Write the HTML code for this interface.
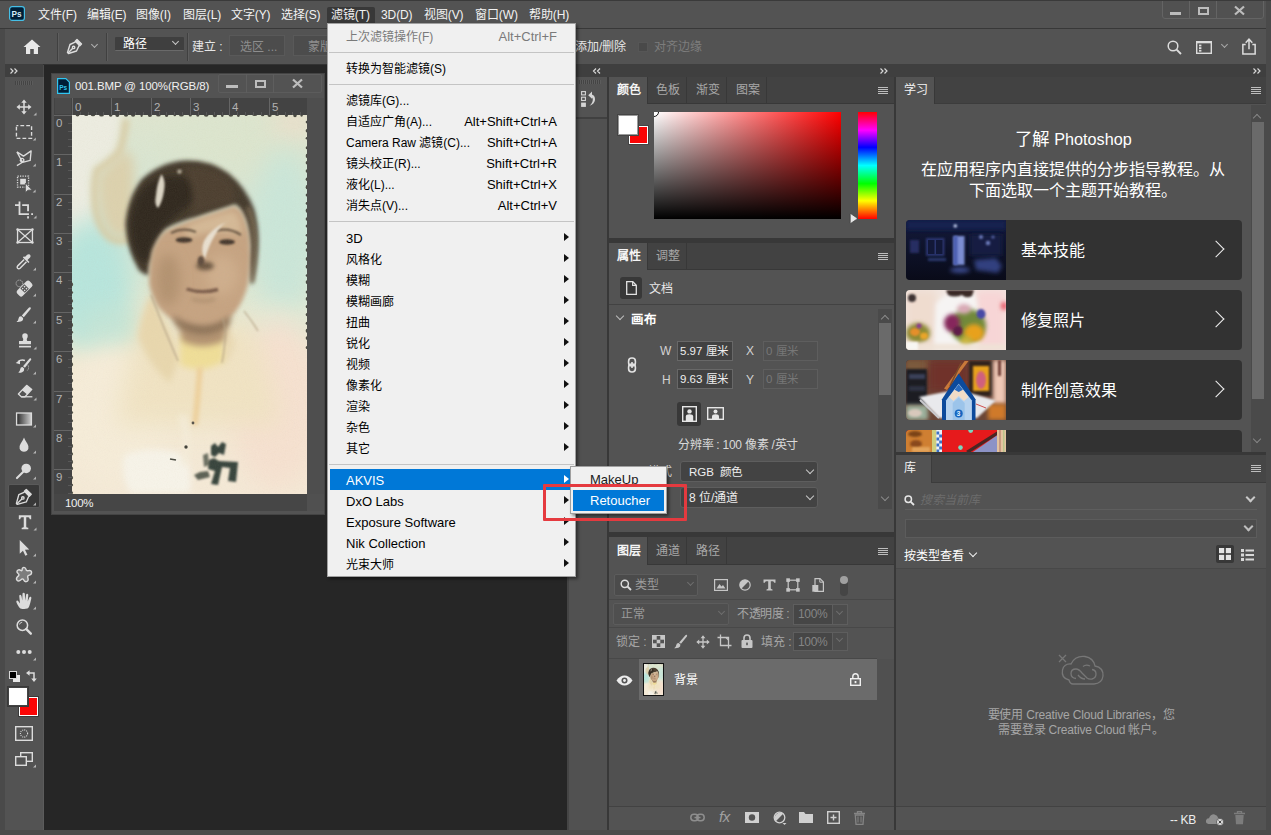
<!DOCTYPE html>
<html lang="zh-CN">
<head>
<meta charset="utf-8">
<title>Photoshop</title>
<style>
*{box-sizing:border-box;margin:0;padding:0}
html,body{width:1271px;height:835px;overflow:hidden}
body{position:relative;background:#4a4a4a;font-family:"Liberation Sans",sans-serif;font-size:12px;color:#e0e0e0;line-height:1}
.a{position:absolute}
.t{position:absolute;white-space:nowrap;line-height:14px;height:14px}
svg{position:absolute;overflow:visible}
.rn{font-size:11.5px;color:#b2b2b2;line-height:13px;height:13px}
/* top bars */
#menubar{left:0;top:0;width:1271px;height:28px;background:#535353;border-top:1px solid #3a3a3a}
#mb .t{top:8px;font-size:12px;color:#f2f2f2;letter-spacing:-0.1px}
#optbar{left:5px;top:29px;width:1261px;height:35px;background:#535353}
.hl{background:#383838}
.vsep{position:absolute;width:1px;background:#404040;box-shadow:1px 0 0 #5e5e5e}
/* panels */
.pbg{background:#535353}
.tabbar{background:#424242}
.tab{position:absolute;top:0;padding-left:2px;height:26px;border-right:1px solid #383838;color:#a8a8a8;font-size:12px;text-align:center;line-height:27px}
.tab.on{height:27px;background:#535353;color:#f4f4f4;font-weight:bold}
.hdr{background:#3f3f3f}
.pm{position:absolute;width:10px;height:7px;border-top:1px solid #bdbdbd;border-bottom:1px solid #bdbdbd}
.pm:before{content:"";position:absolute;left:0;top:1px;width:10px;height:1px;background:#bdbdbd}
.pm:after{content:"";position:absolute;left:0;top:3px;width:10px;height:1px;background:#bdbdbd}
/* dropdown menu */
#menu{left:327px;top:23px;width:249px;height:554px;background:#f0f0f0;border:1px solid #a0a0a0;box-shadow:2px 2px 3px rgba(0,0,0,.45);color:#111;font-size:13px}
#menu>*{margin-top:1px}
#menu>.t{margin-top:2px}
#menu>.t.dis{margin-top:1px}
#menu .t{left:18px;color:#000;font-size:12px;line-height:16px;height:16px}
#menu .lat{font-size:13px}
#menu .sc{left:auto;right:18px;font-size:13px}
#menu .dis{color:#7a7a7a}
#menu .sep{position:absolute;left:1px;right:1px;height:1px;background:#c4c4c4}
#menu .ar{position:absolute;left:236px;width:0;height:0;border-left:5px solid #111;border-top:4.5px solid transparent;border-bottom:4.5px solid transparent}
#menu .sel{position:absolute;left:2px;width:243px;height:21px;background:#0078d7}
#sub{left:570px;top:466px;width:97px;height:48px;background:#f0f0f0;border:1px solid #a0a0a0;box-shadow:2px 2px 3px rgba(0,0,0,.45)}
.fld{position:absolute;background:#414141;border:1px solid #686868;color:#eee;font-size:11.5px;line-height:18px;padding-left:2px;white-space:nowrap}
.dd{position:absolute;background:#454545;border:1px solid #666;border-radius:2px;color:#eee;font-size:12px;white-space:nowrap}
.chev{position:absolute;width:6px;height:6px;border-right:1.3px solid #c8c8c8;border-bottom:1.3px solid #c8c8c8;transform:rotate(45deg)}
.card{position:absolute;left:906px;width:336px;height:60px;background:#323232;border-radius:4px;overflow:hidden}
.card .t{left:115px;top:22px;font-size:16px;line-height:18px;height:18px;color:#fff}
.card .th{position:absolute;left:0;top:0;width:100px;height:60px;overflow:hidden}
.card .cv{position:absolute;left:304px;top:23px;width:12px;height:12px;border-right:1.6px solid #f0f0f0;border-top:1.6px solid #f0f0f0;transform:rotate(45deg) }
</style>
</head>
<body>
<!-- ===== window frame / base ===== -->
<div class="a" id="menubar"></div>
<div class="a hl" style="left:0;top:28px;width:1271px;height:1px"></div>
<div class="a" id="optbar"></div>
<div class="a" style="left:5px;top:64px;width:1261px;height:1px;background:#333"></div>

<!-- menubar content -->
<svg class="a" style="left:9px;top:6px" width="16" height="15" viewBox="0 0 16 15"><rect x="0.6" y="0.6" width="14.8" height="13.8" rx="2.5" fill="#001e36" stroke="#46bfe6" stroke-width="1.2"/><text x="2.6" y="10.8" font-family="Liberation Sans,sans-serif" font-size="8.2" font-weight="bold" fill="#d4ecfa">Ps</text></svg>
<div class="a" style="left:327px;top:7px;width:48px;height:17px;background:#383838;border-radius:2px 2px 0 0"></div>
<div id="mb" class="a" style="left:0;top:0;width:1271px;height:28px">
<span class="t mbi" style="left:38px">文件(F)</span>
<span class="t mbi" style="left:87px">编辑(E)</span>
<span class="t mbi" style="left:136px">图像(I)</span>
<span class="t mbi" style="left:183px">图层(L)</span>
<span class="t mbi" style="left:231px">文字(Y)</span>
<span class="t mbi" style="left:281px">选择(S)</span>
<span class="t mbi" style="left:331px">滤镜(T)</span>
<span class="t mbi" style="left:381px">3D(D)</span>
<span class="t mbi" style="left:424px">视图(V)</span>
<span class="t mbi" style="left:475px">窗口(W)</span>
<span class="t mbi" style="left:529px">帮助(H)</span>
</div>
<!-- window controls -->
<div class="a" style="left:1162px;top:-1px;width:102px;height:20px;background:#515151;border:1px solid #646464;border-radius:0 0 3px 3px"></div>
<div class="a" style="left:1189px;top:0;width:1px;height:18px;background:#646464"></div>
<div class="a" style="left:1216px;top:0;width:1px;height:18px;background:#646464"></div>
<div class="a" style="left:1170px;top:12px;width:11px;height:3px;background:#bcbcbc"></div>
<div class="a" style="left:1198px;top:7px;width:11px;height:8px;border:2px solid #bcbcbc"></div>
<svg style="left:1234px;top:6px" width="11" height="9" viewBox="0 0 11 9"><path d="M1 0.5 L10 8.5 M10 0.5 L1 8.5" stroke="#bcbcbc" stroke-width="2.2"/></svg>
<div class="a" style="left:1266px;top:0;width:5px;height:64px;background:#4a4a4a"></div>
<div class="a" style="left:0;top:0;width:1271px;height:1px;background:#3a3a3a"></div>
<!-- options bar content -->
<svg style="left:23px;top:39px" width="18" height="16" viewBox="0 0 18 16"><path d="M9 0.5 L0.5 8 L3 8 L3 15 L7.2 15 L7.2 10 L10.8 10 L10.8 15 L15 15 L15 8 L17.5 8 Z" fill="#e8e8e8"/></svg>
<div class="vsep" style="left:57px;top:33px;height:28px"></div>
<svg style="left:66px;top:37px" width="18" height="18" viewBox="0 0 18 18"><g fill="none" stroke="#dedede" stroke-width="1.4" stroke-linejoin="round"><path d="M11 2.5 L15.5 7 L13.8 8.7 L9.3 4.2 Z" fill="#dedede"/><path d="M9.6 4.8 L4 7.5 L1.5 15.5 L2.5 16.5 L10.5 14 L13.2 8.4"/><path d="M2 16 L7 11"/><circle cx="7.6" cy="10.4" r="1.2"/></g></svg>
<div class="chev" style="left:92px;top:42px;width:5px;height:5px;border-color:#b0b0b0"></div>
<div class="vsep" style="left:106px;top:33px;height:28px"></div>
<div class="dd" style="left:115px;top:37px;width:69px;height:14px;background:#3f3f3f;border:none;border-bottom:1px solid #6a6a6a;border-radius:1px"><span class="t" style="left:8px;top:1px;font-size:12px;color:#fff;line-height:13px;height:13px">路径</span><div class="chev" style="left:58px;top:2px;width:5px;height:5px"></div></div>
<div class="vsep" style="left:187px;top:33px;height:28px"></div>
<span class="t" style="left:192px;top:40px;font-size:12px;color:#e6e6e6">建立 :</span>
<div class="a" style="left:229px;top:35px;width:56px;height:21px;background:#4c4c4c;border:1px solid #595959"><span class="t" style="left:10px;top:4px;font-size:12px;color:#8e8e8e">选区 ...</span></div>
<div class="a" style="left:293px;top:35px;width:56px;height:21px;background:#4c4c4c;border:1px solid #595959"><span class="t" style="left:14px;top:4px;font-size:12px;color:#8e8e8e">蒙版</span></div>
<span class="t" style="left:575px;top:40px;font-size:12px;color:#e6e6e6">添加/删除</span>
<div class="a" style="left:638px;top:42px;width:10px;height:10px;background:#494949;border:1px solid #565656"></div>
<span class="t" style="left:654px;top:40px;font-size:12px;color:#7d7d7d">对齐边缘</span>
<svg style="left:1167px;top:40px" width="15" height="15" viewBox="0 0 15 15"><circle cx="6" cy="6" r="4.8" fill="none" stroke="#dcdcdc" stroke-width="1.5"/><path d="M9.6 9.6 L14 14" stroke="#dcdcdc" stroke-width="1.9"/></svg>
<svg style="left:1196px;top:41px" width="16" height="13" viewBox="0 0 16 13"><rect x="0.7" y="0.7" width="14.6" height="11.6" fill="none" stroke="#dcdcdc" stroke-width="1.4"/><rect x="0.7" y="0.7" width="14.6" height="1.6" fill="#dcdcdc"/><rect x="3" y="3.6" width="2.4" height="1.8" fill="#dcdcdc"/><rect x="3" y="6.2" width="2.4" height="1.8" fill="#dcdcdc"/><rect x="3" y="8.8" width="2.4" height="1.8" fill="#dcdcdc"/></svg>
<div class="chev" style="left:1222px;top:42px;width:5px;height:5px;border-color:#a8a8a8"></div>
<svg style="left:1241px;top:38px" width="16" height="17" viewBox="0 0 15 18"><path d="M4 7 L1 7 L1 17 L14 17 L14 7 L11 7" fill="none" stroke="#dcdcdc" stroke-width="1.6"/><path d="M7.5 12 L7.5 2 M4 5 L7.5 1.2 L11 5" fill="none" stroke="#dcdcdc" stroke-width="1.6"/></svg>
<!-- canvas area -->
<div class="a" style="left:44px;top:65px;width:523px;height:766px;background:#262626"></div>

<!-- ===== tools panel ===== -->
<div class="a pbg" style="left:5px;top:66px;width:38px;height:764px"></div>
<div class="a hdr" style="left:5px;top:64px;width:38px;height:13px"></div>
<div class="a" style="left:43px;top:77px;width:1px;height:753px;background:#5c5c5c"></div>
<svg style="left:10px;top:68px" width="8" height="6" viewBox="0 0 8 6"><path d="M0.5 0.5 L3 3 L0.5 5.5 M4.5 0.5 L7 3 L4.5 5.5" fill="none" stroke="#d8d8d8" stroke-width="1.2"/></svg>
<div class="a" style="left:15px;top:81px;width:18px;height:4px;background:repeating-linear-gradient(90deg,#444 0 1px,#5c5c5c 1px 2px)"></div>
<div class="a" style="left:8px;top:484px;width:32px;height:24px;background:#383838;border:1px solid #5a5a5a;border-radius:2px"></div>
<svg style="left:13.5px;top:96.8px" width="20" height="20" viewBox="0 0 20 20"><g transform="translate(10 10) scale(0.8) translate(-10 -10)"><path d="M10 2.5V17.5M2.5 10H17.5" stroke="#dcdcdc" stroke-width="1.9" fill="none"/><path d="M10 0.6L13.4 4.8H6.6ZM10 19.4L13.4 15.2H6.6ZM0.6 10L4.8 6.6V13.4ZM19.4 10L15.2 6.6V13.4Z" fill="#dcdcdc"/></g><path d="M22.5 18.5v-3l-3 3Z" fill="#b4b4b4"/></svg>
<svg style="left:14.2px;top:121.5px" width="20" height="20" viewBox="0 0 20 20"><g transform="translate(10 10) scale(0.86) translate(-10 -10)"><rect x="1.2" y="2.6" width="17.6" height="14.8" fill="none" stroke="#dcdcdc" stroke-width="1.6" stroke-dasharray="4.4 2.4" stroke-dashoffset="2.2"/></g><path d="M21.8 18.5v-3l-3 3Z" fill="#b4b4b4"/></svg>
<svg style="left:14.2px;top:147.6px" width="20" height="20" viewBox="0 0 20 20"><g transform="translate(10 10) scale(0.95) translate(-10 -10)"><path d="M2.5 3.5L9.5 8L17.5 2.5L16.5 12.5L8.5 14.5L2.5 3.5M8.5 14.5L2.5 18M6.5 11.2a1.8 1.8 0 1 0 3 2.2a1.8 1.8 0 1 0 -3 -2.2" fill="none" stroke="#dcdcdc" stroke-width="1.4" stroke-linejoin="round"/></g><path d="M21.8 18.5v-3l-3 3Z" fill="#b4b4b4"/></svg>
<svg style="left:14.4px;top:174.2px" width="20" height="20" viewBox="0 0 20 20"><g transform="translate(10 10) scale(0.95) translate(-10 -10)"><rect x="3.2" y="1.7" width="11.6" height="11.6" fill="none" stroke="#dcdcdc" stroke-width="1.4" stroke-dasharray="1.3 1.3"/><rect x="6" y="4.5" width="6" height="6" fill="#dcdcdc"/><path d="M11.5 9L11.5 19L14.2 16.5L18.5 16.3Z" fill="#dcdcdc" stroke="#535353" stroke-width="0.8"/></g><path d="M21.6 18.5v-3l-3 3Z" fill="#b4b4b4"/></svg>
<svg style="left:13.5px;top:199.8px" width="20" height="20" viewBox="0 0 20 20"><g transform="translate(10 10) scale(0.9) translate(-10 -10)"><path d="M0 4.5H5M5 0.5V14.5H15.5M8 4.5H14.5V11.5M14.5 17V19.5" fill="none" stroke="#dcdcdc" stroke-width="2"/><path d="M18 14.5H20" stroke="#dcdcdc" stroke-width="2"/></g><path d="M22.5 18.5v-3l-3 3Z" fill="#b4b4b4"/></svg>
<svg style="left:14.6px;top:226.1px" width="20" height="20" viewBox="0 0 20 20"><g transform="translate(10 10) scale(0.93) translate(-10 -10)"><rect x="2" y="3" width="16" height="14" fill="none" stroke="#dcdcdc" stroke-width="1.4"/><path d="M2 3L18 17M18 3L2 17" stroke="#dcdcdc" stroke-width="1.3"/><circle cx="2" cy="3" r="1.3" fill="#dcdcdc"/><circle cx="18" cy="3" r="1.3" fill="#dcdcdc"/><circle cx="2" cy="17" r="1.3" fill="#dcdcdc"/><circle cx="18" cy="17" r="1.3" fill="#dcdcdc"/></g></svg>
<svg style="left:14.0px;top:252.0px" width="20" height="20" viewBox="0 0 20 20"><g transform="translate(10 10) scale(0.92) translate(-10 -10)"><path d="M10.2 7.2L3.2 14.2Q2 15.5 3 16.8Q4.3 18 5.7 16.8L12.7 9.8" fill="none" stroke="#dcdcdc" stroke-width="1.6"/><path d="M8.8 5.2L14.8 11.2L16 10L13.8 7.8L16.6 5Q17.8 3.2 16.3 1.9Q15 0.9 13.4 2.2L11 4.6L10 3.8Z" fill="#dcdcdc"/></g><path d="M22.0 18.5v-3l-3 3Z" fill="#b4b4b4"/></svg>
<svg style="left:14.0px;top:278.0px" width="20" height="20" viewBox="0 0 20 20"><g transform="translate(10 10) scale(0.92) translate(-10 -10)"><g transform="rotate(-45 10.5 10.5)"><rect x="1" y="6.5" width="19" height="8.4" rx="2.6" fill="#dcdcdc"/><rect x="7.4" y="7.3" width="6.2" height="6.8" fill="#535353"/><circle cx="9.1" cy="9.2" r="0.9" fill="#dcdcdc"/><circle cx="11.9" cy="9.2" r="0.9" fill="#dcdcdc"/><circle cx="9.1" cy="12.2" r="0.9" fill="#dcdcdc"/><circle cx="11.9" cy="12.2" r="0.9" fill="#dcdcdc"/></g><circle cx="5" cy="5" r="3.6" fill="none" stroke="#dcdcdc" stroke-width="1" stroke-dasharray="1 1.2"/></g><path d="M22.0 18.5v-3l-3 3Z" fill="#b4b4b4"/></svg>
<svg style="left:14.0px;top:304.5px" width="20" height="20" viewBox="0 0 20 20"><g transform="translate(10 10) scale(0.92) translate(-10 -10)"><path d="M16.8 1.6Q18 2.4 17.2 3.6L9.8 12.4L7.6 10.6L15.2 2Q16 1.2 16.8 1.6Z" fill="#dcdcdc"/><path d="M7 11.4L9 13.2Q9.5 16 6.5 17.2Q4 18 1.8 17.6Q4 16 4 14Q4.2 11.3 7 11.4Z" fill="#dcdcdc"/></g><path d="M22.0 18.5v-3l-3 3Z" fill="#b4b4b4"/></svg>
<svg style="left:14.5px;top:330.5px" width="20" height="20" viewBox="0 0 20 20"><g transform="translate(10 10) scale(0.92) translate(-10 -10)"><path d="M10 1.5A3 3 0 0 1 13 4.5Q13 6 12 7.5Q11.6 9 12.5 10H16.5V13.5H3.5V10H7.5Q8.4 9 8 7.5Q7 6 7 4.5A3 3 0 0 1 10 1.5Z" fill="#dcdcdc"/><rect x="3.5" y="15.2" width="13" height="1.8" fill="#dcdcdc"/></g><path d="M21.5 18.5v-3l-3 3Z" fill="#b4b4b4"/></svg>
<svg style="left:14.0px;top:356.0px" width="20" height="20" viewBox="0 0 20 20"><g transform="translate(10 10) scale(0.92) translate(-10 -10)"><path d="M17.3 1.7Q18.4 2.5 17.6 3.6L11 12L9 10.4L15.8 2Q16.5 1.2 17.3 1.7Z" fill="#dcdcdc"/><path d="M8.4 11.2L10.2 12.8Q10.7 15.5 8 16.7Q6 17.5 3.8 17.2Q5.8 15.6 5.8 13.8Q6 11.2 8.4 11.2Z" fill="#dcdcdc"/><path d="M3.5 5.2Q7 2.6 11 4" fill="none" stroke="#dcdcdc" stroke-width="1.5"/><path d="M1 6.8L5.8 3.3L5.6 8Z" fill="#dcdcdc"/><path d="M14.5 9.5Q16 13 13 15.5" fill="none" stroke="#dcdcdc" stroke-width="1" stroke-dasharray="1 1.3"/></g><path d="M22.0 18.5v-3l-3 3Z" fill="#b4b4b4"/></svg>
<svg style="left:14.5px;top:382.0px" width="20" height="20" viewBox="0 0 20 20"><g transform="translate(10 10) scale(0.92) translate(-10 -10)"><path d="M11.8 2.8L17.4 7.2L10 15.2H6L2.8 12.2Z" fill="none" stroke="#dcdcdc" stroke-width="1.4" stroke-linejoin="round"/><path d="M11.8 2.8L17.4 7.2L12.4 12.6L6.8 8.2Z" fill="#dcdcdc"/><path d="M6 15.2H18" stroke="#dcdcdc" stroke-width="1.4"/></g><path d="M21.5 18.5v-3l-3 3Z" fill="#b4b4b4"/></svg>
<svg style="left:14.0px;top:408.5px" width="20" height="20" viewBox="0 0 20 20"><g transform="translate(10 10) scale(0.95) translate(-10 -10)"><defs><linearGradient id="gtool" x1="0" x2="1"><stop offset="0" stop-color="#2a2a2a"/><stop offset="1" stop-color="#d0d0d0"/></linearGradient></defs><rect x="2.2" y="3.7" width="15.6" height="12.6" fill="url(#gtool)" stroke="#dcdcdc" stroke-width="1.4"/></g><path d="M22.0 18.5v-3l-3 3Z" fill="#b4b4b4"/></svg>
<svg style="left:14.0px;top:434.5px" width="20" height="20" viewBox="0 0 20 20"><g transform="translate(10 10) scale(0.95) translate(-10 -10)"><path d="M10 2Q11 5 13.6 8.6Q15.5 11.5 14.6 14Q13.4 17.2 10 17.2Q6.6 17.2 5.4 14Q4.5 11.5 6.4 8.6Q9 5 10 2Z" fill="#dcdcdc"/></g><path d="M22.0 18.5v-3l-3 3Z" fill="#b4b4b4"/></svg>
<svg style="left:14.0px;top:460.5px" width="20" height="20" viewBox="0 0 20 20"><g transform="translate(10 10) scale(0.95) translate(-10 -10)"><circle cx="12.3" cy="7.3" r="5" fill="#dcdcdc"/><path d="M9 11L2.6 17.4" stroke="#dcdcdc" stroke-width="2.2" stroke-linecap="round"/></g><path d="M22.0 18.5v-3l-3 3Z" fill="#b4b4b4"/></svg>
<svg style="left:14.0px;top:486.5px" width="20" height="20" viewBox="0 0 20 20"><g transform="translate(10 10) scale(0.95) translate(-10 -10)"><g fill="none" stroke="#dcdcdc" stroke-width="1.4" stroke-linejoin="round"><path d="M12.4 2L17.6 7.2L15.6 9.2L10.4 4Z" fill="#dcdcdc"/><path d="M10.6 4.8L4.6 7.4L2 16.8L3 17.8L12.4 15.2L15 9.2"/><path d="M2.6 17.2L8 11.8"/><circle cx="8.8" cy="11" r="1.3"/></g></g><path d="M22.0 18.5v-3l-3 3Z" fill="#b4b4b4"/></svg>
<svg style="left:14.5px;top:512.0px" width="20" height="20" viewBox="0 0 20 20"><g transform="translate(10 10) scale(0.95) translate(-10 -10)"><path d="M3.5 3H16.5V7H15Q14.8 5 13.5 5H11.3V15Q11.3 16 13.5 16V17.5H6.5V16Q8.7 16 8.7 15V5H6.5Q5.2 5 5 7H3.5Z" fill="#dcdcdc"/></g><path d="M21.5 18.5v-3l-3 3Z" fill="#b4b4b4"/></svg>
<svg style="left:14.0px;top:538.0px" width="20" height="20" viewBox="0 0 20 20"><g transform="translate(10 10) scale(0.95) translate(-10 -10)"><path d="M5.5 1.5L15.5 11.5L11 11.8L13.6 17.2L11.4 18.2L8.9 12.8L5.5 16Z" fill="#dcdcdc"/></g><path d="M22.0 18.5v-3l-3 3Z" fill="#b4b4b4"/></svg>
<svg style="left:14.0px;top:564.5px" width="20" height="20" viewBox="0 0 20 20"><g transform="translate(10 10) scale(0.95) translate(-10 -10)"><path d="M9 2.2Q11.4 1.4 12.2 4.4Q12.6 6 14.8 5.4Q18 4.8 18 7.6Q17.8 9.8 15 10.4Q13.2 11 14.2 13.4Q15 16.4 12.4 17Q10.4 17.2 9.4 14.8Q8.6 13.2 6.8 15Q4.4 17.2 2.6 15.4Q1.2 13.6 3.6 11.4Q5.6 9.8 3.8 8.4Q1.6 6.6 3.4 5Q5 3.8 6.6 5.2Q8 6.2 8 4.4Q8 2.6 9 2.2Z" fill="#7d7d7d" stroke="#dcdcdc" stroke-width="1.5"/></g><path d="M22.0 18.5v-3l-3 3Z" fill="#b4b4b4"/></svg>
<svg style="left:14.0px;top:590.5px" width="20" height="20" viewBox="0 0 20 20"><g transform="translate(10 10) scale(0.95) translate(-10 -10)"><path d="M6.2 17.8Q4.5 16.8 2.2 11.8Q1.4 10 2.6 9.6Q3.8 9.4 4.8 11.2L5.8 12.6L5 5Q4.8 3.4 6 3.3Q7.1 3.3 7.4 5L8.2 9.6L8.4 2.6Q8.4 1.2 9.6 1.2Q10.8 1.2 10.9 2.6L11.2 9.6L12.2 3.4Q12.5 2.1 13.6 2.3Q14.6 2.6 14.5 4L13.9 10.4L15.6 6.4Q16.2 5.2 17.2 5.6Q18 6.1 17.7 7.4Q16.5 13 15.5 15.5Q14.8 17.4 13.6 17.9Q10 18.8 6.2 17.8Z" fill="#dcdcdc"/></g><path d="M22.0 18.5v-3l-3 3Z" fill="#b4b4b4"/></svg>
<svg style="left:14.0px;top:616.5px" width="20" height="20" viewBox="0 0 20 20"><g transform="translate(10 10) scale(0.9) translate(-10 -10)"><circle cx="8.2" cy="8" r="5.8" fill="none" stroke="#dcdcdc" stroke-width="1.7"/><path d="M12.6 12.4L17.6 17.4" stroke="#dcdcdc" stroke-width="2.6" stroke-linecap="round"/><path d="M5 7.2Q5.6 4.8 8 4.6" fill="none" stroke="#dcdcdc" stroke-width="1"/></g></svg>
<svg style="left:14.0px;top:642.0px" width="20" height="20" viewBox="0 0 20 20"><g transform="translate(10 10) scale(1.0) translate(-10 -10)"><circle cx="4.3" cy="10" r="2.0" fill="#dcdcdc"/><circle cx="10" cy="10" r="2.0" fill="#dcdcdc"/><circle cx="15.7" cy="10" r="2.0" fill="#dcdcdc"/></g><path d="M22.0 18.5v-3l-3 3Z" fill="#b4b4b4"/></svg>
<div class="a" style="left:13px;top:675px;width:7px;height:7px;background:#e8e8e8"></div>
<div class="a" style="left:9px;top:671px;width:8px;height:8px;background:#000;border:1px solid #d8d8d8"></div>
<svg style="left:26px;top:670px" width="11" height="12" viewBox="0 0 11 12"><path d="M2.5 3H8V9" fill="none" stroke="#dcdcdc" stroke-width="1.5"/><path d="M0 3L3.6 0.2V5.8ZM8 12L5.2 8.4H10.8Z" fill="#dcdcdc"/></svg>
<div class="a" style="left:19px;top:697px;width:19px;height:19px;background:#fa0505;border:1px solid #fff;box-shadow:0 0 0 1px #3a3a3a"></div>
<div class="a" style="left:8px;top:687px;width:20px;height:19px;background:#fff;border:1px solid #444;box-shadow:0 0 0 1px #3a3a3a"></div>
<svg style="left:15px;top:726px" width="18" height="15" viewBox="0 0 18 15"><rect x="0.7" y="0.7" width="16.6" height="13.6" fill="none" stroke="#dcdcdc" stroke-width="1.4"/><circle cx="9" cy="7.5" r="3.6" fill="none" stroke="#dcdcdc" stroke-width="1.1" stroke-dasharray="1 1.1"/></svg>
<svg style="left:15px;top:752px" width="22" height="16" viewBox="0 0 22 16"><rect x="5.7" y="0.7" width="11.6" height="8.6" fill="#535353" stroke="#dcdcdc" stroke-width="1.4"/><rect x="0.7" y="4.7" width="10.6" height="8.6" fill="#535353" stroke="#dcdcdc" stroke-width="1.4"/><path d="M21 15.5V12.5L18 15.5Z" fill="#b8b8b8"/></svg>
<!-- ===== document window ===== -->
<div class="a" style="left:51px;top:73px;width:274px;height:442px;background:#535353;border:1px solid #444"></div>
<div class="a" style="left:54px;top:98px;width:270px;height:413px;background:#4e4e4e"></div>
<!-- title -->
<svg style="left:57px;top:78px" width="13" height="16" viewBox="0 0 13 16"><path d="M0.6 0.6H8.8L12.4 4.2V15.4H0.6Z" fill="#001e36" stroke="#31c5f0" stroke-width="1.2"/><text x="2.2" y="11.5" font-family="Liberation Sans,sans-serif" font-size="6.5" font-weight="bold" fill="#31c5f0">Ps</text></svg>
<span class="t" style="left:75px;top:79px;font-size:12px;color:#f0f0f0;letter-spacing:-0.12px;font-size:11.5px">001.BMP @ 100%(RGB/8)</span>
<div class="a" style="left:218px;top:74px;width:104px;height:19px;border:1px solid #5c5c5c;border-radius:2px"></div>
<div class="a" style="left:246px;top:74px;width:1px;height:19px;background:#5e5e5e"></div>
<div class="a" style="left:273px;top:74px;width:1px;height:19px;background:#5e5e5e"></div>
<div class="a" style="left:226px;top:85px;width:12px;height:3px;background:#bdbdbd"></div>
<div class="a" style="left:255px;top:80px;width:11px;height:8px;border:2px solid #bdbdbd"></div>
<svg style="left:292px;top:79px" width="11" height="9" viewBox="0 0 11 9"><path d="M1 0.5L10 8.5M10 0.5L1 8.5" stroke="#bdbdbd" stroke-width="2.3"/></svg>
<!-- rulers -->
<div class="a" style="left:54px;top:98px;width:253px;height:17px;background:#434343"></div>
<div class="a" style="left:54px;top:98px;width:18px;height:396px;background:#434343"></div>
<div class="a" style="left:72px;top:112px;width:235px;height:3px;background:repeating-linear-gradient(90deg,#585858 0 1px,transparent 1px 7.874px)"></div>
<div class="a" style="left:68px;top:115px;width:4px;height:379px;background:repeating-linear-gradient(180deg,#585858 0 1px,transparent 1px 7.874px)"></div>
<div class="a" style="left:55px;top:98px;width:16px;height:16px;background:#4a4a4a"></div>
<div class="a" style="left:72px;top:98px;width:1px;height:17px;background:#656565"></div><span class="t rn" style="left:75px;top:101px">0</span><div class="a" style="left:111px;top:98px;width:1px;height:17px;background:#656565"></div><span class="t rn" style="left:114px;top:101px">1</span><div class="a" style="left:151px;top:98px;width:1px;height:17px;background:#656565"></div><span class="t rn" style="left:154px;top:101px">2</span><div class="a" style="left:190px;top:98px;width:1px;height:17px;background:#656565"></div><span class="t rn" style="left:193px;top:101px">3</span><div class="a" style="left:229px;top:98px;width:1px;height:17px;background:#656565"></div><span class="t rn" style="left:232px;top:101px">4</span><div class="a" style="left:269px;top:98px;width:1px;height:17px;background:#656565"></div><span class="t rn" style="left:272px;top:101px">5</span>
<div class="a" style="left:54px;top:115px;width:18px;height:1px;background:#656565"></div><span class="t rn" style="left:56px;top:117px">0</span><div class="a" style="left:54px;top:154px;width:18px;height:1px;background:#656565"></div><span class="t rn" style="left:56px;top:156px">1</span><div class="a" style="left:54px;top:194px;width:18px;height:1px;background:#656565"></div><span class="t rn" style="left:56px;top:196px">2</span><div class="a" style="left:54px;top:233px;width:18px;height:1px;background:#656565"></div><span class="t rn" style="left:56px;top:235px">3</span><div class="a" style="left:54px;top:272px;width:18px;height:1px;background:#656565"></div><span class="t rn" style="left:56px;top:274px">4</span><div class="a" style="left:54px;top:312px;width:18px;height:1px;background:#656565"></div><span class="t rn" style="left:56px;top:314px">5</span><div class="a" style="left:54px;top:351px;width:18px;height:1px;background:#656565"></div><span class="t rn" style="left:56px;top:353px">6</span><div class="a" style="left:54px;top:391px;width:18px;height:1px;background:#656565"></div><span class="t rn" style="left:56px;top:393px">7</span><div class="a" style="left:54px;top:430px;width:18px;height:1px;background:#656565"></div><span class="t rn" style="left:56px;top:432px">8</span><div class="a" style="left:54px;top:469px;width:18px;height:1px;background:#656565"></div><span class="t rn" style="left:56px;top:471px">9</span>
<!-- photo -->
<svg id="photo" style="left:72px;top:115px" width="235" height="379" viewBox="0 0 235 379">
<defs>
<filter id="b1" filterUnits="userSpaceOnUse" x="-40" y="-40" width="315" height="459"><feGaussianBlur stdDeviation="0.9"/></filter>
<filter id="b2" filterUnits="userSpaceOnUse" x="-40" y="-40" width="315" height="459"><feGaussianBlur stdDeviation="2"/></filter>
<filter id="b3" filterUnits="userSpaceOnUse" x="-40" y="-40" width="315" height="459"><feGaussianBlur stdDeviation="3.2"/></filter>
<filter id="b6" filterUnits="userSpaceOnUse" x="-40" y="-40" width="315" height="459"><feGaussianBlur stdDeviation="6"/></filter>
<filter id="b12" filterUnits="userSpaceOnUse" x="-40" y="-40" width="315" height="459"><feGaussianBlur stdDeviation="12"/></filter>
<filter id="b18" filterUnits="userSpaceOnUse" x="-40" y="-40" width="315" height="459"><feGaussianBlur stdDeviation="18"/></filter>
<filter id="grain" x="0" y="0" width="100%" height="100%"><feTurbulence type="fractalNoise" baseFrequency="0.9" numOctaves="2" seed="7" result="n"/><feColorMatrix in="n" type="matrix" values="0 0 0 0 0.5  0 0 0 0 0.45  0 0 0 0 0.35  0 0 0 0.10 0"/></filter>
<linearGradient id="pbg" x1="0" y1="0" x2="0" y2="1"><stop offset="0" stop-color="#dfe6d0"/><stop offset="0.30" stop-color="#d3e6d6"/><stop offset="0.55" stop-color="#e6ead4"/><stop offset="0.66" stop-color="#f4ead4"/><stop offset="1" stop-color="#f6ead8"/></linearGradient>
<clipPath id="pc"><rect width="235" height="379"/></clipPath>
</defs>
<g id="pg" clip-path="url(#pc)">
<rect width="235" height="379" fill="url(#pbg)"/>
<!-- broad colour fields -->
<path d="M-10 -10H52L46 38L22 56L22 100L30 125L-10 150Z" fill="#eeeee2" filter="url(#b6)"/>
<ellipse cx="160" cy="30" rx="70" ry="34" fill="#dde6cf" filter="url(#b18)"/>
<ellipse cx="222" cy="8" rx="22" ry="14" fill="#ece0cc" filter="url(#b12)"/>
<ellipse cx="20" cy="170" rx="40" ry="66" fill="#b8e6de" filter="url(#b12)"/>
<ellipse cx="40" cy="215" rx="34" ry="24" fill="#c4e6d8" filter="url(#b12)"/>
<ellipse cx="212" cy="120" rx="32" ry="85" fill="#cbe7da" filter="url(#b12)"/>
<ellipse cx="205" cy="215" rx="30" ry="26" fill="#e3ead8" filter="url(#b12)"/>
<ellipse cx="205" cy="290" rx="48" ry="85" fill="#f7e2d1" filter="url(#b12)"/>
<ellipse cx="40" cy="300" rx="55" ry="70" fill="#f7eeda" filter="url(#b12)"/>
<!-- stain ring -->
<path d="M54 4Q52 25 47 38Q35 50 25 55Q21 75 24 96Q28 116 40 124Q52 128 62 122" fill="none" stroke="#d8caa0" stroke-width="6" filter="url(#b3)"/>
<path d="M50 36Q60 34 62 52L62 120Q50 128 38 120Q24 104 26 60Q36 50 50 36Z" fill="#ddd2ae" filter="url(#b6)"/>
<!-- clothes -->
<path d="M44 310Q56 240 78 180L104 216L152 216L170 198Q196 235 208 310Z" fill="#f2e4c4" filter="url(#b12)"/>
<path d="M66 222Q70 196 79 179Q86 196 96 214Q102 228 106 246L98 268Q78 252 66 222Z" fill="#e9d8ae" filter="url(#b3)"/>
<path d="M150 204Q158 214 164 228Q160 244 150 250Z" fill="#ecdcb6" filter="url(#b3)"/>
<path d="M108 220L150 218L152 246Q130 260 108 250Z" fill="#f1df98" filter="url(#b3)"/>
<path d="M128 252Q126 280 123 310" fill="none" stroke="#efcf96" stroke-width="5" filter="url(#b2)"/>
<!-- neck -->
<path d="M104 196L158 196L152 226Q130 236 110 226Z" fill="#b29270" filter="url(#b3)"/>
<!-- hair mass -->
<path d="M53.6 109Q56 82 70 64Q88 48 110 45.8Q136 44 156 58Q174 72 182 94Q188 116 185 140Q183 158 179 170Q176 150 178 131Q176 108 172 102Q168 92 162.5 89Q146 95 117 104.5Q100 110 93 114Q84 124 80 136Q77 150 77 160Q72 160 66.7 155Q55 134 53.6 109Z" fill="#43382b" filter="url(#b2)"/>
<path d="M58 108Q60 84 74 70Q92 58 112 62Q128 66 126 84Q108 96 92 112Q82 124 78 146Q70 150 64 140Q58 126 58 108Z" fill="#2f271d" filter="url(#b3)"/>
<path d="M112 52Q140 48 158 66Q166 78 162 88Q140 92 118 102Q126 80 112 52Z" fill="#4b3d2d" filter="url(#b3)"/>
<path d="M176 92Q188 120 180 168" fill="none" stroke="#7d6d54" stroke-width="4" filter="url(#b2)"/>
<!-- face -->
<path d="M80 136Q86 122 93 116Q104 110 117 106Q146 97 162 91Q170 94 173 104Q178 118 178 131Q179 150 176 169Q172 186 162.5 198Q150 210 134 213.5Q118 212 105 207.5Q92 200 86 190.7Q79 178 77.5 169Q77 150 80 136Z" fill="#c6a381" filter="url(#b2)"/>
<path d="M116 110Q142 100 162 96Q170 104 170 120Q140 112 114 124Z" fill="#d5b996" filter="url(#b3)"/>
<ellipse cx="96" cy="165" rx="12" ry="26" fill="#b39270" filter="url(#b6)"/>
<ellipse cx="150" cy="160" rx="16" ry="20" fill="#cfae8c" filter="url(#b6)"/>
<path d="M100 200Q132 222 160 200L156 210Q132 228 104 210Z" fill="#8a6f55" filter="url(#b3)"/>
<ellipse cx="112" cy="125" rx="8.5" ry="2.8" fill="#43362a" filter="url(#b1)"/>
<ellipse cx="155" cy="127" rx="8" ry="2.8" fill="#43362a" filter="url(#b1)"/>
<path d="M99 118Q111 112 124 117M144 116Q157 112 169 120" fill="none" stroke="#6a5742" stroke-width="2.2" filter="url(#b1)"/>
<ellipse cx="133" cy="151" rx="9" ry="4.2" fill="#6b5541" filter="url(#b2)"/>
<path d="M114.6 174Q130 179 146 174.5" fill="none" stroke="#7a5c49" stroke-width="3.4" filter="url(#b1)"/>
<path d="M120 184Q131 188 143 184" fill="none" stroke="#a98a6a" stroke-width="2.5" filter="url(#b2)"/>
<!-- collar lines -->
<path d="M79 180Q92 214 106 246M150.6 203Q156 216 150 248M172 196Q180 206 186 216" fill="none" stroke="#b4a285" stroke-width="1.2" filter="url(#b1)"/>
<!-- scratches -->
<path d="M89.5 59Q94 66 92 76Q90 88 86 93Q82 90 84 80Q85 68 89.5 59Z" fill="#ddd6c6" filter="url(#b1)"/>
<circle cx="107.5" cy="56.6" r="2.4" fill="#a89f8c" filter="url(#b1)"/>
<path d="M157 106Q150 108 143 120Q136 132 133 144Q128 136 132 126Q140 112 157 106Z" fill="#e9e0d0" filter="url(#b1)"/>
<ellipse cx="129" cy="146" rx="3.4" ry="5" fill="#5e4c3c" filter="url(#b1)"/>
<!-- bottom damage + stamp -->
<path d="M52 340Q78 330 108 338Q122 350 118 378L58 378Q48 360 52 340Z" fill="#f8f5ea" filter="url(#b3)"/>
<path d="M110 300Q118 330 112 350" fill="none" stroke="#f6efdc" stroke-width="6" filter="url(#b3)"/>
<g fill="#36423b" filter="url(#b1)"><path d="M139 331L143 328L146 332L150 327L154 329L152 340L147 338L143 342L139 340Z"/><path d="M137 345L142 343L147 346L166 347L164 367L156 366L158 353L150 352L146 370L139 369L143 356L136 354Z"/><path d="M122 360L128 357L136 356L138 362L126 365Z" fill="#5a5f52"/><path d="M131 340L136 338L137 350L132 352Z" fill="#6a6e60"/></g>
<circle cx="114" cy="332" r="1.7" fill="#3e3e38"/><circle cx="121" cy="308" r="1.4" fill="#55524a"/><path d="M98 344L104 345" stroke="#4a4a42" stroke-width="1.6"/>
<rect width="235" height="379" filter="url(#grain)" opacity="0.9"/>
<ellipse cx="5.5" cy="0" rx="1.9" ry="1.4" fill="#4a4a42"/><ellipse cx="14.2" cy="0" rx="2.0" ry="1.1" fill="#4a4a42"/><ellipse cx="21.0" cy="0" rx="2.2" ry="1.3" fill="#4a4a42"/><ellipse cx="29.5" cy="0" rx="2.4" ry="1.6" fill="#4a4a42"/><ellipse cx="38.7" cy="0" rx="1.8" ry="1.8" fill="#4a4a42"/><ellipse cx="45.3" cy="0" rx="2.0" ry="2.0" fill="#4a4a42"/><ellipse cx="54.0" cy="0" rx="2.1" ry="1.8" fill="#4a4a42"/><ellipse cx="61.1" cy="0" rx="2.1" ry="1.7" fill="#4a4a42"/><ellipse cx="69.6" cy="0" rx="1.2" ry="2.0" fill="#4a4a42"/><ellipse cx="77.9" cy="0" rx="2.1" ry="2.1" fill="#4a4a42"/><ellipse cx="86.4" cy="0" rx="2.3" ry="1.5" fill="#4a4a42"/><ellipse cx="94.6" cy="0" rx="1.7" ry="2.1" fill="#4a4a42"/><ellipse cx="102.8" cy="0" rx="1.3" ry="1.2" fill="#4a4a42"/><ellipse cx="109.4" cy="0" rx="2.4" ry="1.5" fill="#4a4a42"/><ellipse cx="118.3" cy="0" rx="1.6" ry="1.6" fill="#4a4a42"/><ellipse cx="125.8" cy="0" rx="1.6" ry="1.7" fill="#4a4a42"/><ellipse cx="134.2" cy="0" rx="2.3" ry="1.8" fill="#4a4a42"/><ellipse cx="142.9" cy="0" rx="2.2" ry="2.2" fill="#4a4a42"/><ellipse cx="150.3" cy="0" rx="1.4" ry="2.0" fill="#4a4a42"/><ellipse cx="158.9" cy="0" rx="2.3" ry="1.7" fill="#4a4a42"/><ellipse cx="166.4" cy="0" rx="1.5" ry="2.0" fill="#4a4a42"/><ellipse cx="174.1" cy="0" rx="1.5" ry="1.1" fill="#4a4a42"/><ellipse cx="182.7" cy="0" rx="2.4" ry="1.1" fill="#4a4a42"/><ellipse cx="190.6" cy="0" rx="1.7" ry="1.2" fill="#4a4a42"/><ellipse cx="197.6" cy="0" rx="2.1" ry="2.0" fill="#4a4a42"/><ellipse cx="205.1" cy="0" rx="1.9" ry="1.1" fill="#4a4a42"/><ellipse cx="214.4" cy="0" rx="1.6" ry="2.1" fill="#4a4a42"/><ellipse cx="223.0" cy="0" rx="1.8" ry="2.2" fill="#4a4a42"/><ellipse cx="229.6" cy="0" rx="1.3" ry="1.7" fill="#4a4a42"/><ellipse cx="235" cy="7.1" rx="1.3" ry="1.4" fill="#4a4a42"/><ellipse cx="235" cy="15.8" rx="1.3" ry="1.8" fill="#4a4a42"/><ellipse cx="235" cy="23.3" rx="1.3" ry="1.2" fill="#4a4a42"/><ellipse cx="235" cy="32.7" rx="1.3" ry="1.5" fill="#4a4a42"/><ellipse cx="235" cy="40.9" rx="1.3" ry="2.1" fill="#4a4a42"/><ellipse cx="235" cy="47.8" rx="1.3" ry="1.7" fill="#4a4a42"/><ellipse cx="235" cy="56.0" rx="1.3" ry="1.8" fill="#4a4a42"/><ellipse cx="235" cy="64.2" rx="1.3" ry="1.8" fill="#4a4a42"/><ellipse cx="235" cy="72.2" rx="1.3" ry="2.1" fill="#4a4a42"/><ellipse cx="235" cy="80.0" rx="1.3" ry="1.6" fill="#4a4a42"/><ellipse cx="235" cy="88.4" rx="1.3" ry="1.4" fill="#4a4a42"/><ellipse cx="235" cy="95.6" rx="1.3" ry="2.2" fill="#4a4a42"/><ellipse cx="235" cy="104.0" rx="1.3" ry="1.7" fill="#4a4a42"/><ellipse cx="235" cy="111.0" rx="1.3" ry="1.6" fill="#4a4a42"/><ellipse cx="235" cy="120.2" rx="1.3" ry="1.2" fill="#4a4a42"/><ellipse cx="235" cy="128.2" rx="1.3" ry="1.8" fill="#4a4a42"/><ellipse cx="235" cy="135.1" rx="1.3" ry="1.8" fill="#4a4a42"/><ellipse cx="235" cy="143.9" rx="1.3" ry="1.9" fill="#4a4a42"/><ellipse cx="235" cy="151.7" rx="1.3" ry="1.9" fill="#4a4a42"/><ellipse cx="235" cy="160.5" rx="1.3" ry="1.2" fill="#4a4a42"/><ellipse cx="235" cy="167.1" rx="1.3" ry="1.9" fill="#4a4a42"/><ellipse cx="235" cy="176.9" rx="1.3" ry="1.5" fill="#4a4a42"/><ellipse cx="235" cy="183.9" rx="1.3" ry="1.8" fill="#4a4a42"/><ellipse cx="235" cy="191.6" rx="1.3" ry="1.6" fill="#4a4a42"/><ellipse cx="235" cy="199.6" rx="1.3" ry="1.6" fill="#4a4a42"/><ellipse cx="235" cy="208.2" rx="1.3" ry="1.5" fill="#4a4a42"/><ellipse cx="235" cy="215.8" rx="1.3" ry="2.0" fill="#4a4a42"/><ellipse cx="235" cy="223.1" rx="1.3" ry="1.8" fill="#4a4a42"/><ellipse cx="235" cy="232.5" rx="1.3" ry="1.5" fill="#4a4a42"/><ellipse cx="0" cy="169.4" rx="1.1" ry="1.8" fill="#55554a"/><ellipse cx="0" cy="177.5" rx="1.1" ry="1.2" fill="#55554a"/><ellipse cx="0" cy="185.9" rx="1.1" ry="1.7" fill="#55554a"/><ellipse cx="0" cy="193.2" rx="1.1" ry="1.3" fill="#55554a"/><ellipse cx="0" cy="201.7" rx="1.1" ry="1.8" fill="#55554a"/><ellipse cx="0" cy="209.9" rx="1.1" ry="1.9" fill="#55554a"/><ellipse cx="0" cy="217.3" rx="1.1" ry="1.3" fill="#55554a"/><ellipse cx="0" cy="226.3" rx="1.1" ry="1.9" fill="#55554a"/><ellipse cx="0" cy="233.9" rx="1.1" ry="1.2" fill="#55554a"/><ellipse cx="0" cy="241.2" rx="1.1" ry="1.5" fill="#55554a"/><ellipse cx="0" cy="249.4" rx="1.1" ry="1.8" fill="#55554a"/><ellipse cx="0" cy="258.7" rx="1.1" ry="1.2" fill="#55554a"/><ellipse cx="0" cy="265.6" rx="1.1" ry="1.8" fill="#55554a"/><ellipse cx="0" cy="274.3" rx="1.1" ry="1.8" fill="#55554a"/><ellipse cx="0" cy="281.7" rx="1.1" ry="1.1" fill="#55554a"/><ellipse cx="0" cy="289.6" rx="1.1" ry="1.8" fill="#55554a"/><ellipse cx="0" cy="297.5" rx="1.1" ry="1.3" fill="#55554a"/><ellipse cx="0" cy="305.8" rx="1.1" ry="1.4" fill="#55554a"/><ellipse cx="0" cy="313.8" rx="1.1" ry="1.9" fill="#55554a"/><ellipse cx="0" cy="321.3" rx="1.1" ry="1.0" fill="#55554a"/><ellipse cx="0" cy="330.9" rx="1.1" ry="1.9" fill="#55554a"/><ellipse cx="0" cy="339.0" rx="1.1" ry="1.4" fill="#55554a"/><ellipse cx="0" cy="346.9" rx="1.1" ry="1.9" fill="#55554a"/><ellipse cx="0" cy="353.4" rx="1.1" ry="1.7" fill="#55554a"/><ellipse cx="0" cy="362.7" rx="1.1" ry="1.7" fill="#55554a"/><ellipse cx="0" cy="370.0" rx="1.1" ry="1.3" fill="#55554a"/><ellipse cx="0" cy="377.7" rx="1.1" ry="1.2" fill="#55554a"/>
</g>
</svg>
<!-- status bar -->
<div class="a" style="left:54px;top:494px;width:253px;height:17px;background:#464646"></div>
<div class="a" style="left:307px;top:494px;width:17px;height:17px;background:#505050"></div>
<span class="t" style="left:65px;top:496px;font-size:11.5px;color:#f0f0f0;letter-spacing:-0.3px">100%</span>
<!-- ===== collapsed icon strip ===== -->
<div class="a" style="left:567px;top:64px;width:330px;height:13px;background:#3f3f3f"></div>
<div class="a" style="left:567px;top:77px;width:40px;height:753px;background:#515151;border-left:2px solid #454545"></div>
<div class="a pbg" style="left:577px;top:77px;width:30px;height:40px"></div>
<div class="a" style="left:569px;top:117px;width:38px;height:2px;background:#404040"></div>
<div class="a" style="left:607px;top:77px;width:2px;height:753px;background:#383838"></div>
<svg style="left:593px;top:68px" width="8" height="6" viewBox="0 0 8 6"><path d="M3 0.5L0.5 3L3 5.5M7 0.5L4.5 3L7 5.5" fill="none" stroke="#d8d8d8" stroke-width="1.2"/></svg>
<div class="a" style="left:579px;top:80px;width:22px;height:4px;background:repeating-linear-gradient(90deg,#444 0 1px,#5c5c5c 1px 2px)"></div>
<svg style="left:581px;top:91px" width="17" height="16" viewBox="0 0 17 16"><rect x="0.6" y="0.6" width="3.8" height="3.3" fill="none" stroke="#d6d6d6" stroke-width="1.1"/><rect x="0.6" y="6.2" width="3.8" height="3.3" fill="none" stroke="#d6d6d6" stroke-width="1.1"/><rect x="0.1" y="11.6" width="4.8" height="4.3" fill="#d6d6d6"/><path d="M9 3.2Q14.5 3.5 14 9Q13.5 13 8.5 14.8Q12 11.5 11.8 8.5Q11.6 5.6 9 5.4Z" fill="#d6d6d6"/><path d="M7.2 4.2L11 0.6V7.8Z" fill="#d6d6d6"/></svg>
<!-- ===== middle panel column ===== -->
<div class="a pbg" style="left:609px;top:77px;width:285px;height:753px"></div>
<div class="a" style="left:894px;top:77px;width:2px;height:753px;background:#383838"></div>
<svg style="left:880px;top:68px" width="8" height="6" viewBox="0 0 8 6"><path d="M0.5 0.5L3 3L0.5 5.5M4.5 0.5L7 3L4.5 5.5" fill="none" stroke="#d8d8d8" stroke-width="1.2"/></svg>
<!-- COLOR PANEL -->
<div class="a tabbar" style="left:609px;top:77px;width:285px;height:27px;border-bottom:1px solid #383838">
 <div class="tab on" style="left:0;width:39px">颜色</div><div class="tab" style="left:39px;width:39px">色板</div><div class="tab" style="left:78px;width:40px">渐变</div><div class="tab" style="left:118px;width:40px">图案</div>
 <div class="pm" style="left:269px;top:10px"></div>
</div>
<div class="a" style="left:629px;top:126px;width:19px;height:18px;background:#fa0505;border:1px solid #fff;box-shadow:0 0 0 1px #444"></div>
<div class="a" style="left:618px;top:115px;width:20px;height:20px;background:#fff;border:1px solid #9a9a9a;box-shadow:0 0 0 1px #444"></div>
<div class="a" style="left:654px;top:112px;width:187px;height:107px;overflow:hidden;background:linear-gradient(to top,#000,rgba(0,0,0,0)),linear-gradient(to right,#fff,#f00)"><div class="a" style="left:-5px;top:-5px;width:10px;height:10px;border-radius:5px;background:#fff;border:1px solid #111"></div></div>
<div class="a" style="left:858px;top:112px;width:19px;height:107px;background:linear-gradient(to bottom,#f00 0%,#f0f 17%,#00f 33%,#0ff 50%,#0f0 67%,#ff0 83%,#f00 100%)"></div>
<svg style="left:849px;top:213px" width="9" height="11" viewBox="0 0 9 11"><path d="M1.2 1.2Q1.2 0.4 2 0.8L7.8 4.8Q8.6 5.5 7.8 6.2L2 10.2Q1.2 10.6 1.2 9.8Z" fill="#e8e8e8" stroke="#3a3a3a" stroke-width="0.7"/></svg>
<div class="a" style="left:609px;top:238px;width:285px;height:5px;background:#383838"></div>
<!-- PROPERTIES PANEL -->
<div class="a tabbar" style="left:609px;top:243px;width:285px;height:27px;border-bottom:1px solid #383838">
 <div class="tab on" style="left:0;width:39px">属性</div><div class="tab" style="left:39px;width:39px">调整</div>
 <div class="pm" style="left:269px;top:10px"></div>
</div>
<div class="a" style="left:620px;top:277px;width:22px;height:22px;background:#383838;border-radius:3px"></div>
<svg style="left:626px;top:281px" width="11" height="14" viewBox="0 0 11 14"><path d="M0.7 0.7H6.8L10.3 4.2V13.3H0.7Z" fill="none" stroke="#e2e2e2" stroke-width="1.3"/><path d="M6.6 0.9V4.4H10.1" fill="none" stroke="#e2e2e2" stroke-width="1.1"/></svg>
<span class="t" style="left:649px;top:282px;font-size:12px;color:#e8e8e8">文档</span>
<div class="a" style="left:609px;top:304px;width:285px;height:1px;background:#424242"></div>
<div class="chev" style="left:617px;top:313px;width:6px;height:6px;border-color:#bdbdbd"></div>
<span class="t" style="left:631px;top:313px;font-size:12.5px;color:#fff;font-weight:bold">画布</span>
<span class="t" style="left:660px;top:344px;font-size:12px;color:#d2d2d2">W</span>
<div class="fld" style="left:677px;top:341px;width:56px;height:20px">5.97 厘米</div>
<span class="t" style="left:746px;top:344px;font-size:12px;color:#d2d2d2">X</span>
<div class="fld" style="left:763px;top:341px;width:55px;height:20px;color:#777;border-color:#5e5e5e;background:#505050">0 厘米</div>
<span class="t" style="left:662px;top:373px;font-size:12px;color:#d2d2d2">H</span>
<div class="fld" style="left:677px;top:369px;width:56px;height:20px">9.63 厘米</div>
<span class="t" style="left:746px;top:373px;font-size:12px;color:#d2d2d2">Y</span>
<div class="fld" style="left:763px;top:369px;width:55px;height:20px;color:#777;border-color:#5e5e5e;background:#505050">0 厘米</div>
<svg style="left:627px;top:357px" width="10" height="16" viewBox="0 0 10 16"><rect x="1.6" y="1" width="6.8" height="8" rx="3.2" fill="none" stroke="#e2e2e2" stroke-width="1.6"/><rect x="1.6" y="7" width="6.8" height="8" rx="3.2" fill="none" stroke="#e2e2e2" stroke-width="1.6"/><rect x="4.2" y="5" width="1.6" height="6" fill="#e2e2e2"/></svg>
<div class="a" style="left:677px;top:402px;width:24px;height:24px;background:#383838;border-radius:3px"></div>
<svg style="left:682px;top:406px" width="15" height="16" viewBox="0 0 15 16"><rect x="0.7" y="0.7" width="13.6" height="14.6" fill="none" stroke="#e6e6e6" stroke-width="1.4"/><circle cx="7.5" cy="5.4" r="2.2" fill="#e6e6e6"/><path d="M3.8 15V10.5Q3.8 8.2 7.5 8.2Q11.2 8.2 11.2 10.5V15Z" fill="#e6e6e6"/></svg>
<svg style="left:707px;top:407px" width="17" height="13" viewBox="0 0 17 13"><rect x="0.7" y="0.7" width="15.6" height="11.6" fill="none" stroke="#e6e6e6" stroke-width="1.4"/><circle cx="8.5" cy="4.6" r="2" fill="#e6e6e6"/><path d="M5 12V9.2Q5 7.2 8.5 7.2Q12 7.2 12 9.2V12Z" fill="#e6e6e6"/></svg>
<span class="t" style="left:678px;top:438px;font-size:12px;color:#dadada;letter-spacing:-0.25px">分辨率 : 100 像素 /英寸</span>
<span class="t" style="left:648px;top:465px;font-size:12px;color:#dadada">模式</span>
<div class="dd" style="left:680px;top:461px;width:138px;height:21px;background:#434343;border-color:#5e5e5e;border-radius:3px"><span class="t" style="left:8px;top:3px;font-size:11.5px">RGB&nbsp; 颜色</span><div class="chev" style="left:126px;top:5px"></div></div>
<div class="dd" style="left:680px;top:487px;width:138px;height:21px;background:#434343;border-color:#5e5e5e;border-radius:3px"><span class="t" style="left:8px;top:3px;font-size:12px">8 位/通道</span><div class="chev" style="left:126px;top:5px"></div></div>
<div class="a" style="left:878px;top:309px;width:14px;height:200px;background:#4a4a4a"></div>
<div class="a" style="left:879px;top:323px;width:12px;height:72px;background:#6a6a6a"></div>
<div class="chev" style="left:882px;top:316px;width:6px;height:6px;border-color:#8a8a8a;transform:rotate(225deg)"></div>
<div class="chev" style="left:882px;top:494px;width:6px;height:6px;border-color:#8a8a8a"></div>
<div class="a" style="left:609px;top:532px;width:285px;height:5px;background:#383838"></div>
<!-- LAYERS PANEL -->
<div class="a tabbar" style="left:609px;top:537px;width:285px;height:28px;border-bottom:1px solid #383838">
 <div class="tab on" style="left:0;width:39px;height:28px;line-height:28px">图层</div><div class="tab" style="left:39px;width:39px;height:27px;line-height:28px">通道</div><div class="tab" style="left:78px;width:40px;height:27px;line-height:28px">路径</div>
 <div class="pm" style="left:269px;top:11px"></div>
</div>

<div class="a" style="left:614px;top:574px;width:84px;height:22px;background:#4b4b4b;border:1px solid #5c5c5c;border-radius:2px"></div>
<svg style="left:620px;top:579px" width="12" height="12" viewBox="0 0 12 12"><circle cx="4.8" cy="4.8" r="3.6" fill="none" stroke="#dcdcdc" stroke-width="1.5"/><path d="M7.5 7.5L11 11" stroke="#dcdcdc" stroke-width="1.8"/></svg>
<span class="t" style="left:635px;top:578px;font-size:12px;color:#9c9c9c">类型</span>
<div class="chev" style="left:688px;top:580px;width:5px;height:5px;border-color:#6e6e6e"></div>
<svg style="left:714px;top:579px" width="14" height="12" viewBox="0 0 14 12"><rect x="0.6" y="0.6" width="12.8" height="10.8" fill="none" stroke="#c6c6c6" stroke-width="1.2"/><path d="M2.5 9.5L5.5 5L7.5 7.5L9 6L11.5 9.5Z" fill="#c6c6c6"/></svg>
<svg style="left:739px;top:579px" width="12" height="12" viewBox="0 0 12 12"><circle cx="6" cy="6" r="5.2" fill="none" stroke="#c6c6c6" stroke-width="1.2"/><path d="M2.3 9.7A5.2 5.2 0 0 1 9.7 2.3Z" fill="#c6c6c6"/></svg>
<svg style="left:763px;top:579px" width="13" height="12" viewBox="0 0 13 12"><path d="M0.5 0.5H12.5V3.8H11.2Q11 2.2 9.8 2.2H7.8V9.6Q7.8 10.4 9.5 10.4V11.5H3.5V10.4Q5.2 10.4 5.2 9.6V2.2H3.2Q2 2.2 1.8 3.8H0.5Z" fill="#c6c6c6"/></svg>
<svg style="left:786px;top:578px" width="14" height="14" viewBox="0 0 14 14"><rect x="2.2" y="2.2" width="9.6" height="9.6" fill="none" stroke="#c6c6c6" stroke-width="1.2"/><rect x="0.3" y="0.3" width="3.6" height="3.6" fill="#c6c6c6"/><rect x="10.1" y="0.3" width="3.6" height="3.6" fill="#c6c6c6"/><rect x="0.3" y="10.1" width="3.6" height="3.6" fill="#c6c6c6"/><rect x="10.1" y="10.1" width="3.6" height="3.6" fill="#c6c6c6"/></svg>
<svg style="left:812px;top:578px" width="12" height="14" viewBox="0 0 12 14"><path d="M3 0.6H8L11.4 4V13.4H3Z" fill="none" stroke="#c6c6c6" stroke-width="1.2"/><path d="M7.8 0.8V4.2H11.2" fill="none" stroke="#c6c6c6" stroke-width="1"/><rect x="0.3" y="7" width="6" height="6.7" fill="#c6c6c6"/></svg>
<div class="a" style="left:840px;top:580px;width:8px;height:16px;background:#454545;border-radius:4px"></div>
<div class="a" style="left:840px;top:576px;width:8px;height:8px;background:#a0a0a0;border-radius:4px"></div>
<div class="a" style="left:609px;top:599px;width:285px;height:1px;background:#484848"></div>
<div class="a" style="left:613px;top:603px;width:116px;height:22px;background:#4f4f4f;border:1px solid #5c5c5c;border-radius:2px"></div>
<span class="t" style="left:621px;top:607px;font-size:12px;color:#9a9a9a">正常</span>
<div class="chev" style="left:719px;top:609px;width:5px;height:5px;border-color:#6e6e6e"></div>
<span class="t" style="left:737px;top:607px;font-size:12px;color:#a6a6a6;letter-spacing:-0.4px">不透明度 :</span>
<div class="a" style="left:793px;top:604px;width:55px;height:21px;border:1px solid #5e5e5e;background:#4d4d4d"></div>
<div class="a" style="left:794px;top:605px;width:39px;height:19px;background:#464646;border-right:1px solid #5e5e5e"></div>
<span class="t" style="left:798px;top:607px;font-size:12px;color:#858585;letter-spacing:-0.3px">100%</span>
<div class="chev" style="left:837px;top:609px;width:5px;height:5px;border-color:#6e6e6e"></div>
<div class="a" style="left:609px;top:627px;width:285px;height:1px;background:#484848"></div>
<span class="t" style="left:616px;top:635px;font-size:12px;color:#a6a6a6">锁定 :</span>
<svg style="left:652px;top:635px" width="13" height="13" viewBox="0 0 13 13"><rect x="0.5" y="0.5" width="12" height="12" fill="none" stroke="#c6c6c6" stroke-width="1"/><rect x="1" y="1" width="3.7" height="3.7" fill="#c6c6c6"/><rect x="8.3" y="1" width="3.7" height="3.7" fill="#c6c6c6"/><rect x="4.7" y="4.7" width="3.6" height="3.6" fill="#c6c6c6"/><rect x="1" y="8.3" width="3.7" height="3.7" fill="#c6c6c6"/><rect x="8.3" y="8.3" width="3.7" height="3.7" fill="#c6c6c6"/></svg>
<svg style="left:673px;top:634px" width="15" height="15" viewBox="0 0 15 15"><path d="M13.6 0.8Q14.6 1.5 13.9 2.5L8 9.8L6.2 8.4L12.4 1.2Q13 0.5 13.6 0.8Z" fill="#c6c6c6"/><path d="M5.7 9L7.4 10.5Q7.8 12.8 5.4 13.8Q3.4 14.5 1.2 14.2Q3.2 12.8 3.2 11.2Q3.4 9 5.7 9Z" fill="#c6c6c6"/></svg>
<svg style="left:696px;top:635px" width="14" height="14" viewBox="0 0 14 14"><path d="M7 2V12M2 7H12" stroke="#c6c6c6" stroke-width="1.3"/><path d="M7 0.3L9.4 3.2H4.6ZM7 13.7L9.4 10.8H4.6ZM0.3 7L3.2 4.6V9.4ZM13.7 7L10.8 4.6V9.4Z" fill="#c6c6c6"/></svg>
<svg style="left:717px;top:634px" width="15" height="15" viewBox="0 0 15 15"><path d="M3.5 0.5V11.5H14.5M0.5 3.5H11.5V14.5" fill="none" stroke="#c6c6c6" stroke-width="1.3"/><path d="M9 3.5L11.5 6" stroke="#c6c6c6" stroke-width="1.2"/></svg>
<svg style="left:741px;top:634px" width="12" height="14" viewBox="0 0 12 14"><rect x="0.5" y="6" width="11" height="8" rx="1" fill="#c6c6c6"/><path d="M3 6V4Q3 1 6 1Q9 1 9 4V6" fill="none" stroke="#c6c6c6" stroke-width="1.6"/><rect x="5.2" y="8.6" width="1.6" height="2.6" fill="#535353"/></svg>
<span class="t" style="left:761px;top:635px;font-size:12px;color:#a6a6a6">填充 :</span>
<div class="a" style="left:793px;top:632px;width:55px;height:19px;border:1px solid #5e5e5e;background:#4d4d4d"></div>
<div class="a" style="left:794px;top:633px;width:39px;height:17px;background:#464646;border-right:1px solid #5e5e5e"></div>
<span class="t" style="left:798px;top:635px;font-size:12px;color:#858585;letter-spacing:-0.3px">100%</span>
<div class="chev" style="left:837px;top:636px;width:5px;height:5px;border-color:#6e6e6e"></div>
<!-- layer row -->
<div class="a" style="left:609px;top:658px;width:268px;height:1px;background:#484848"></div>
<div class="a" style="left:609px;top:659px;width:285px;height:147px;background:#505050"></div>
<div class="a pbg" style="left:609px;top:659px;width:30px;height:41px"></div>
<div class="a" style="left:639px;top:659px;width:238px;height:41px;background:#6b6b6b"></div>
<svg style="left:616px;top:675px" width="17" height="11" viewBox="0 0 17 11"><path d="M0.5 5.5Q4 0.5 8.5 0.5Q13 0.5 16.5 5.5Q13 10.5 8.5 10.5Q4 10.5 0.5 5.5Z" fill="#ececec"/><circle cx="8.5" cy="5.5" r="3" fill="#535353"/><circle cx="8.5" cy="5.5" r="1.4" fill="#ececec"/></svg>
<div class="a" style="left:643px;top:663px;width:21px;height:33px;background:#111"></div>
<svg style="left:644px;top:664px;overflow:hidden" width="19" height="31" viewBox="0 0 235 379" preserveAspectRatio="none"><use href="#pg"/></svg>
<span class="t" style="left:674px;top:673px;font-size:12px;color:#fff">背景</span>
<svg style="left:850px;top:673px" width="11" height="13" viewBox="0 0 11 13"><rect x="0.7" y="5.7" width="9.6" height="6.6" fill="none" stroke="#f0f0f0" stroke-width="1.4"/><path d="M2.8 5.5V3.6Q2.8 0.8 5.5 0.8Q8.2 0.8 8.2 3.6V5.5" fill="none" stroke="#f0f0f0" stroke-width="1.4"/><rect x="4.6" y="8" width="1.8" height="2.2" fill="#f0f0f0"/></svg>
<!-- bottom bar -->
<div class="a" style="left:609px;top:806px;width:285px;height:1px;background:#424242"></div>
<svg style="left:690px;top:813px" width="15" height="9" viewBox="0 0 15 9"><rect x="0.8" y="1.3" width="7.4" height="6.4" rx="3.2" fill="none" stroke="#8e8e8e" stroke-width="1.5"/><rect x="6.8" y="1.3" width="7.4" height="6.4" rx="3.2" fill="none" stroke="#8e8e8e" stroke-width="1.5"/><rect x="4.5" y="3.8" width="6" height="1.5" fill="#8e8e8e"/></svg>
<span class="t" style="left:719px;top:809px;font-size:15px;font-style:italic;color:#a0a0a0;line-height:16px;height:16px;letter-spacing:-0.3px">fx</span>
<svg style="left:745px;top:812px" width="14" height="11" viewBox="0 0 14 11"><rect x="0" y="0" width="14" height="11" fill="#d0d0d0"/><circle cx="7" cy="5.5" r="3.2" fill="#535353"/></svg>
<svg style="left:773px;top:811px" width="14" height="14" viewBox="0 0 14 14"><circle cx="6.5" cy="6.5" r="5.3" fill="none" stroke="#d0d0d0" stroke-width="1.3"/><path d="M2.8 10.2A5.3 5.3 0 0 1 10.2 2.8Z" fill="#d0d0d0"/><path d="M9.5 12L13.5 12L11.5 14Z" fill="#d0d0d0"/></svg>
<svg style="left:799px;top:812px" width="14" height="11" viewBox="0 0 14 11"><path d="M0 0H5L6.5 2H14V11H0Z" fill="#d0d0d0"/></svg>
<svg style="left:827px;top:811px" width="13" height="13" viewBox="0 0 13 13"><rect x="0.7" y="0.7" width="11.6" height="11.6" fill="none" stroke="#d0d0d0" stroke-width="1.4"/><path d="M6.5 3.5V9.5M3.5 6.5H9.5" stroke="#d0d0d0" stroke-width="1.4"/></svg>
<svg style="left:854px;top:811px" width="11" height="14" viewBox="0 0 11 14"><path d="M0 2.5H11M3.5 2.5V0.7H7.5V2.5" fill="none" stroke="#858585" stroke-width="1.3"/><path d="M1.3 4L2 13.3H9L9.7 4Z" fill="none" stroke="#858585" stroke-width="1.3"/><path d="M4 5.5V11.5M7 5.5V11.5" stroke="#858585" stroke-width="1"/></svg>



<!-- ===== right column ===== -->
<div class="a" style="left:896px;top:64px;width:370px;height:13px;background:#3f3f3f"></div>
<svg style="left:1253px;top:68px" width="8" height="6" viewBox="0 0 8 6"><path d="M0.5 0.5L3 3L0.5 5.5M4.5 0.5L7 3L4.5 5.5" fill="none" stroke="#d8d8d8" stroke-width="1.2"/></svg>
<div class="a pbg" style="left:896px;top:77px;width:370px;height:753px"></div>
<!-- LEARN -->
<div class="a tabbar" style="left:896px;top:77px;width:370px;height:27px;border-bottom:1px solid #3c3c3c">
 <div class="tab on" style="left:0;width:39px;font-weight:normal">学习</div>
 <div class="pm" style="left:355px;top:10px"></div>
</div>
<span class="t" style="left:896px;top:128px;width:355px;text-align:center;font-size:17.5px;line-height:22px;height:22px;color:#fff">了解 <span style="font-size:16.2px">Photoshop</span></span>
<span class="t" style="left:896px;top:160px;width:353px;text-align:center;font-size:16px;line-height:20px;height:20px;color:#fff">在应用程序内直接提供的分步指导教程。从</span>
<span class="t" style="left:896px;top:181px;width:353px;text-align:center;font-size:16px;line-height:20px;height:20px;color:#fff">下面选取一个主题开始教程。</span>
<div class="a" style="left:896px;top:104px;width:370px;height:348px;overflow:hidden">
<div class="card" style="left:10px;top:116px"><svg class="th" viewBox="0 0 100 60" width="100" height="60"><defs><filter id="tb2" filterUnits="userSpaceOnUse" x="-10" y="-10" width="120" height="80"><feGaussianBlur stdDeviation="2"/></filter><filter id="tb1" filterUnits="userSpaceOnUse" x="-10" y="-10" width="120" height="80"><feGaussianBlur stdDeviation="0.9"/></filter><filter id="tb4" filterUnits="userSpaceOnUse" x="-10" y="-10" width="120" height="80"><feGaussianBlur stdDeviation="4"/></filter><linearGradient id="nt" x1="0" y1="0" x2="0" y2="1"><stop offset="0" stop-color="#141a3c"/><stop offset="0.5" stop-color="#0e1229"/><stop offset="1" stop-color="#090b19"/></linearGradient></defs><rect width="100" height="60" fill="url(#nt)"/>
<rect x="0" y="0" width="100" height="10" fill="#182050" filter="url(#tb2)"/>
<rect x="4" y="20" width="9" height="13" fill="#252f62" filter="url(#tb1)"/>
<rect x="20" y="18" width="18.5" height="18" fill="#2a356e" filter="url(#tb1)"/><rect x="22" y="20" width="6.5" height="14" fill="#121838"/><rect x="30" y="20" width="6.5" height="14" fill="#121838"/>
<rect x="22" y="38" width="18" height="3" fill="#2b376c" filter="url(#tb1)"/>
<rect x="47.5" y="16" width="11" height="29" fill="#7b8dd2" filter="url(#tb1)"/><rect x="47.5" y="16" width="4" height="29" fill="#4c5db0" filter="url(#tb1)"/>
<ellipse cx="54" cy="50" rx="10" ry="3" fill="#3b4a8c" filter="url(#tb2)"/>
<rect x="64" y="14" width="32" height="22" fill="#161d42" filter="url(#tb2)"/>
<circle cx="75" cy="17" r="2" fill="#6f7fc0" filter="url(#tb1)"/><circle cx="82" cy="23" r="2.2" fill="#6f7fc0" filter="url(#tb1)"/><circle cx="87" cy="17" r="1.6" fill="#5b6ab0" filter="url(#tb1)"/>
<path d="M68 40L90 38L96 46L92 53L70 50Z" fill="#33417f" filter="url(#tb2)"/>
<circle cx="49.3" cy="5.9" r="1.7" fill="#d6e0ff" filter="url(#tb1)"/>
</svg><span class="t">基本技能</span><div class="cv"></div></div>
<div class="card" style="left:10px;top:186px"><svg class="th" viewBox="0 0 100 60" width="100" height="60"><rect width="100" height="60" fill="#f1e6e0"/>
<rect x="0" y="0" width="30" height="60" fill="#efdccf" filter="url(#tb4)"/>
<rect x="70" y="0" width="30" height="60" fill="#f7d5d6" filter="url(#tb4)"/>
<path d="M28 60L30 14Q40 2 50 3L68 3Q74 14 72 60Z" fill="#f6f4f3" filter="url(#tb2)"/>
<ellipse cx="6" cy="8" rx="4" ry="4" fill="#3d3232" filter="url(#tb1)"/>
<path d="M40 0H68L66 6Q60 9 56 5Q48 8 42 5Z" fill="#3b2a26" filter="url(#tb1)"/>
<ellipse cx="98" cy="16" rx="3" ry="4" fill="#e85060" filter="url(#tb2)"/>
<ellipse cx="62" cy="36" rx="18" ry="17" fill="#71893b" filter="url(#tb2)"/>
<ellipse cx="46" cy="33" rx="8" ry="9" fill="#86285c" filter="url(#tb2)"/>
<ellipse cx="52" cy="41" rx="5" ry="5" fill="#5e1f48" filter="url(#tb1)"/>
<ellipse cx="58" cy="19" rx="7" ry="5" fill="#d9a9b6" filter="url(#tb2)"/>
<ellipse cx="75" cy="24" rx="4.5" ry="5" fill="#4848a6" filter="url(#tb1)"/>
<ellipse cx="68" cy="43" rx="10" ry="9" fill="#e8a11e" filter="url(#tb2)"/>
<ellipse cx="60" cy="51" rx="6" ry="5" fill="#c9b43a" filter="url(#tb2)"/>
<ellipse cx="12" cy="43" rx="12" ry="10" fill="#8d8a36" filter="url(#tb2)"/>
<ellipse cx="9" cy="42" rx="5" ry="4" fill="#e58f2a" filter="url(#tb1)"/><ellipse cx="18" cy="46" rx="4" ry="3.4" fill="#e8a52a" filter="url(#tb1)"/><ellipse cx="13" cy="36" rx="2.6" ry="2.4" fill="#8a3a90" filter="url(#tb1)"/>
<rect x="0" y="54" width="100" height="6" fill="#efe2d6" filter="url(#tb2)"/><rect x="0" y="52" width="12" height="8" fill="#f8f6f2" filter="url(#tb1)"/>
</svg><span class="t">修复照片</span><div class="cv"></div></div>
<div class="card" style="left:10px;top:256px"><svg class="th" viewBox="0 0 100 60" width="100" height="60"><rect width="100" height="60" fill="#6a4536"/>
<rect x="0" y="0" width="24" height="12" fill="#7c5a3e" filter="url(#tb2)"/>
<rect x="22" y="0" width="40" height="32" fill="#70302a" filter="url(#tb4)"/>
<rect x="0" y="9" width="21" height="36" fill="#1d1d22" filter="url(#tb1)"/><rect x="3" y="14" width="16" height="5" fill="#3a4058" filter="url(#tb1)"/><rect x="3" y="26" width="16" height="5" fill="#2e3040" filter="url(#tb1)"/>
<rect x="63" y="1" width="24" height="35" fill="#33201c" filter="url(#tb1)"/><rect x="67" y="6" width="16" height="25" fill="#e7a21e" filter="url(#tb1)"/><ellipse cx="75" cy="20" rx="5" ry="9" fill="#d0607e" filter="url(#tb1)"/>
<rect x="87" y="0" width="13" height="44" fill="#efc8b6" filter="url(#tb2)"/><rect x="92" y="0" width="3" height="16" fill="#6a3a30" filter="url(#tb1)"/>
<rect x="82" y="44" width="18" height="16" fill="#cf7a2c" filter="url(#tb2)"/>
<path d="M58.7 1L62.5 1L41 30L38 28.5Z" fill="#c9793a"/><path d="M55 3L44 26" stroke="#7a4a2a" stroke-width="1.6"/>
<rect x="0" y="45" width="22" height="15" fill="#9bb19c" filter="url(#tb2)"/><ellipse cx="9" cy="53" rx="7" ry="4" fill="#d8c8bc" filter="url(#tb1)"/>
<path d="M13 37L51.5 29.5L90 40.5L71 58L33 58Z" fill="#e9e9ec" filter="url(#tb1)"/><path d="M14 40L33 58" stroke="#c8c8cc" stroke-width="2"/><path d="M70 44L80 48" stroke="#d05050" stroke-width="1"/>
<path d="M36 60V39.3L52.7 13.5L69.5 39.3V60Z" fill="#0c4a9c"/>
<path d="M40 60V40.5L52.7 23.7L65.9 40.5V60Z" fill="#b7d3ef"/>
<path d="M43 37L52.7 24.5L62.5 37L58 41L52.7 36L47.5 41Z" fill="#f1dcc6"/><path d="M48.6 29.8L52.7 24.2L56.9 29.8L52.7 32Z" fill="#2a6cc0"/>
<path d="M46.7 60V43L52.7 37.5L58.7 43V60Z" fill="#9cc4ea"/>
<circle cx="52.7" cy="53.6" r="4" fill="#1766c0"/><text x="50.6" y="56.2" font-family="Liberation Sans,sans-serif" font-size="7" font-weight="bold" fill="#dfeeff">3</text>
</svg><span class="t">制作创意效果</span><div class="cv"></div></div>
<div class="card" style="left:10px;top:326px"><svg class="th" viewBox="0 0 100 60" width="100" height="60"><rect width="100" height="60" fill="#e61a1c"/>
<rect x="0" y="0" width="26" height="60" fill="#cf7f32"/><ellipse cx="9" cy="4" rx="7" ry="3" fill="#7a4318" filter="url(#tb1)"/><ellipse cx="10" cy="14" rx="6" ry="4" fill="#8a4a1c" filter="url(#tb1)"/><rect x="6" y="17" width="18" height="5" fill="#e3a45c" filter="url(#tb1)"/>
<rect x="26" y="0" width="10" height="60" fill="#e4dfc8"/><rect x="26" y="0" width="4.5" height="60" fill="#cfcf7e"/>
<rect x="30.5" y="0" width="5.5" height="60" fill="#eef0f8"/><path d="M30.5 1.5h2.7v3h-2.7zM33.2 4.5h2.8v3h-2.8zM30.5 7.5h2.7v3h-2.7zM33.2 10.5h2.8v3h-2.8zM30.5 13.5h2.7v3h-2.7zM33.2 16.5h2.8v3h-2.8zM30.5 19.5h2.7v3h-2.7z" fill="#3c72c4"/>
<path d="M91 1.5L93 4L63 23L60 21Z" fill="#4a2624"/><path d="M93 4V24H64Z" fill="#8d93c6"/>
<rect x="91" y="0" width="9" height="60" fill="#e3c3a0"/><rect x="93" y="0" width="2" height="60" fill="#c89a80"/><rect x="97" y="0" width="1.5" height="60" fill="#b9c58a"/>
<circle cx="64.7" cy="0.6" r="2.4" fill="#79d8c0"/><circle cx="54.5" cy="17.6" r="2.3" fill="#79d8c0"/>
</svg></div>
</div>
<!-- learn scrollbar -->
<div class="a" style="left:1251px;top:105px;width:15px;height:347px;background:#4a4a4a"></div>
<div class="a" style="left:1252px;top:122px;width:12px;height:277px;background:#6a6a6a"></div>
<div class="chev" style="left:1254px;top:115px;width:6px;height:6px;border-color:#858585;transform:rotate(225deg)"></div>
<div class="chev" style="left:1254px;top:436px;width:6px;height:6px;border-color:#858585"></div>
<div class="a" style="left:896px;top:452px;width:370px;height:3px;background:#383838"></div>
<!-- LIBRARIES -->
<div class="a" style="left:896px;top:455px;width:370px;height:28px;background:#464646;border-bottom:1px solid #3c3c3c"></div>
<div class="a pbg" style="left:896px;top:455px;width:36px;height:28px;border-right:1px solid #3c3c3c"></div>
<span class="t" style="left:904px;top:461px;font-size:12px;color:#f4f4f4">库</span>
<div class="pm" style="left:1251px;top:465px"></div>
<svg style="left:904px;top:495px" width="11" height="11" viewBox="0 0 11 11"><circle cx="4.3" cy="4.3" r="3.2" fill="none" stroke="#e6e6e6" stroke-width="1.5"/><path d="M6.8 6.8L10 10" stroke="#e6e6e6" stroke-width="1.8"/></svg>
<span class="t" style="left:920px;top:493px;font-size:12px;font-style:italic;color:#6c6c6c">搜索当前库</span>
<div class="chev" style="left:1247px;top:494px;width:7px;height:7px;border-color:#c8c8c8;border-width:0 2px 2px 0"></div>
<div class="a" style="left:905px;top:509px;width:352px;height:1px;background:#5e5e5e"></div>
<div class="a" style="left:905px;top:519px;width:352px;height:19px;background:#4c4c4c;border:1px solid #5c5c5c"></div>
<div class="chev" style="left:1245px;top:523px;width:7px;height:7px;border-color:#bdbdbd;border-width:0 2px 2px 0"></div>
<span class="t" style="left:904px;top:549px;font-size:12px;color:#fff">按类型查看</span>
<div class="chev" style="left:970px;top:550px;width:6px;height:6px;border-color:#f0f0f0;border-width:0 1.8px 1.8px 0"></div>
<div class="a" style="left:1216px;top:545px;width:18px;height:18px;background:#383838;border-radius:2px"></div>
<svg style="left:1219px;top:548px" width="12" height="12" viewBox="0 0 12 12"><rect x="0" y="0" width="5.2" height="5.2" fill="#e4e4e4"/><rect x="6.8" y="0" width="5.2" height="5.2" fill="#e4e4e4"/><rect x="0" y="6.8" width="5.2" height="5.2" fill="#e4e4e4"/><rect x="6.8" y="6.8" width="5.2" height="5.2" fill="#e4e4e4"/></svg>
<svg style="left:1241px;top:549px" width="13" height="12" viewBox="0 0 13 12"><rect x="0" y="0" width="3" height="3" fill="#d8d8d8"/><rect x="0" y="4.5" width="3" height="3" fill="#d8d8d8"/><rect x="0" y="9" width="3" height="3" fill="#d8d8d8"/><rect x="4.5" y="0.5" width="8.5" height="2" fill="#d8d8d8"/><rect x="4.5" y="5" width="8.5" height="2" fill="#d8d8d8"/><rect x="4.5" y="9.5" width="8.5" height="2" fill="#d8d8d8"/></svg>
<div class="a" style="left:896px;top:568px;width:370px;height:1px;background:#484848"></div>
<div class="a" style="left:896px;top:569px;width:370px;height:237px;background:#4f4f4f"></div>
<svg style="left:1057px;top:653px" width="48" height="34" viewBox="0 0 48 34"><g fill="none" stroke="#777" stroke-width="1.3"><path d="M2 2L9 9M9 2L2 9"/><path d="M12 27Q4 25 5.5 17Q7 10.5 14 11Q18 2.5 28 3.5Q36.5 5 38 13Q46.5 14.5 46 23Q45 30.5 37 31H16Q13 31 12 27Z"/><path d="M19 25.5Q14 25 14 20.5Q14 16 19 16Q22 16 25 20L30 25Q32 26.5 35 26Q39 25 39 21Q39 17 35 16.5M21 22Q24 26 28 26M33 13Q29 11 26 13.5"/></g></svg>
<span class="t" style="left:896px;top:708px;width:370px;text-align:center;font-size:12px;letter-spacing:-0.17px;color:#a6a6a6">要使用 Creative Cloud Libraries，您</span>
<span class="t" style="left:896px;top:723px;width:370px;text-align:center;font-size:12px;letter-spacing:-0.2px;color:#a6a6a6">需要登录 Creative Cloud 帐户。</span>
<div class="a" style="left:896px;top:806px;width:370px;height:1px;background:#424242"></div>
<span class="t" style="left:1170px;top:813px;font-size:12px;color:#eee;letter-spacing:-0.3px">-- KB</span>
<svg style="left:1205px;top:812px" width="20" height="14" viewBox="0 0 20 14"><path d="M3.5 12Q0.5 11.5 1 8.5Q1.6 6.2 4 6.3Q5.5 2 9.5 2.4Q12.6 3 13.2 6Q15.5 6 16 8L12 12Z" fill="#8e8e8e"/><circle cx="15" cy="10" r="3.6" fill="#d8d8d8" stroke="#535353" stroke-width="0.8"/><path d="M13.6 8.6L16.4 11.4M16.4 8.6L13.6 11.4" stroke="#444" stroke-width="1"/></svg>
<svg style="left:1234px;top:811px" width="11" height="14" viewBox="0 0 11 14"><path d="M0 2.5H11M3.5 2.5V0.7H7.5V2.5" fill="none" stroke="#7c7c7c" stroke-width="1.3"/><path d="M1.3 4L2 13.3H9L9.7 4Z" fill="#7c7c7c"/></svg>
<!-- window border -->
<div class="a" style="left:0;top:830px;width:1271px;height:5px;background:#4a4a4a"></div>
<div class="a" style="left:1266px;top:64px;width:5px;height:771px;background:#4a4a4a"></div>

<!-- ===== dropdown menu ===== -->
<div class="a" id="menu">
<span class="t dis" style="top:4px">上次滤镜操作(F)</span><span class="t sc dis" style="top:4px">Alt+Ctrl+F</span>
<div class="sep" style="top:27px"></div>
<span class="t " style="top:35px">转换为智能滤镜(S)</span>
<div class="sep" style="top:59px"></div>
<span class="t " style="top:67px">滤镜库(G)...</span>
<span class="t " style="top:88px">自适应广角(A)...</span><span class="t sc " style="top:88px">Alt+Shift+Ctrl+A</span>
<span class="t " style="top:109px">Camera Raw 滤镜(C)...</span><span class="t sc " style="top:109px">Shift+Ctrl+A</span>
<span class="t " style="top:130px">镜头校正(R)...</span><span class="t sc " style="top:130px">Shift+Ctrl+R</span>
<span class="t " style="top:151px">液化(L)...</span><span class="t sc " style="top:151px">Shift+Ctrl+X</span>
<span class="t " style="top:172px">消失点(V)...</span><span class="t sc " style="top:172px">Alt+Ctrl+V</span>
<div class="sep" style="top:196px"></div>
<span class="t lat" style="top:205px">3D</span><div class="ar" style="top:208px"></div>
<span class="t " style="top:226px">风格化</span><div class="ar" style="top:229px"></div>
<span class="t " style="top:247px">模糊</span><div class="ar" style="top:250px"></div>
<span class="t " style="top:268px">模糊画廊</span><div class="ar" style="top:271px"></div>
<span class="t " style="top:289px">扭曲</span><div class="ar" style="top:292px"></div>
<span class="t " style="top:310px">锐化</span><div class="ar" style="top:313px"></div>
<span class="t " style="top:331px">视频</span><div class="ar" style="top:334px"></div>
<span class="t " style="top:352px">像素化</span><div class="ar" style="top:355px"></div>
<span class="t " style="top:373px">渲染</span><div class="ar" style="top:376px"></div>
<span class="t " style="top:394px">杂色</span><div class="ar" style="top:397px"></div>
<span class="t " style="top:415px">其它</span><div class="ar" style="top:418px"></div>
<div class="sep" style="top:439px"></div>
<div class="sel" style="top:444px"></div>
<span class="t lat" style="top:447px;color:#fff">AKVIS</span>
<div class="ar" style="top:450px;border-left-color:#fff"></div>
<span class="t lat" style="top:468px">DxO Labs</span><div class="ar" style="top:471px"></div>
<span class="t lat" style="top:489px">Exposure Software</span><div class="ar" style="top:492px"></div>
<span class="t lat" style="top:510px">Nik Collection</span><div class="ar" style="top:513px"></div>
<span class="t " style="top:531px">光束大师</span><div class="ar" style="top:534px"></div>
</div>
<div class="a" id="sub">
<span class="t" style="left:19px;top:5px;font-size:13px;color:#1a1a1a;line-height:16px;height:16px">MakeUp</span>
<div class="a" style="left:2px;top:23px;width:91px;height:21px;background:#0078d7"></div>
<span class="t" style="left:19px;top:26px;font-size:13px;color:#fff;line-height:16px;height:16px">Retoucher</span>
</div>
<div class="a" style="left:543px;top:484px;width:144px;height:37px;border:3px solid #e53a3f;border-radius:1px"></div>

</body>
</html>
